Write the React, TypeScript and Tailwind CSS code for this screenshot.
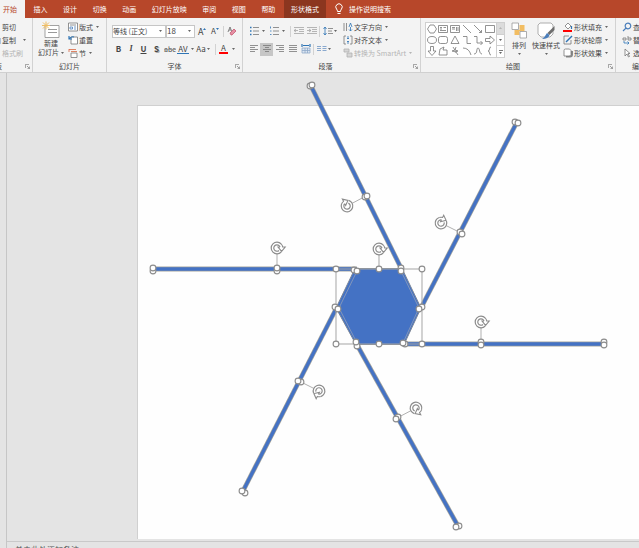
import React from "react";
import clsx from "clsx";

const TABS = ["开始", "插入", "设计", "切换", "动画", "幻灯片放映", "审阅", "视图", "帮助", "形状格式"];

function Caret({ muted }: { muted?: boolean }) {
  return (
    <svg viewBox="0 0 3 2" className={clsx("w-[3px] h-[2px] shrink-0", muted ? "fill-[#b5b5b5]" : "fill-[#666]")}>
      <path d="M0 0h3L1.5 2z" />
    </svg>
  );
}

function Divider() {
  return <span className="block w-px h-[11px] bg-[#d2d2d2] shrink-0" />;
}

type GroupProps = { label: string; launcher?: boolean; className?: string; labelClass?: string; children: React.ReactNode };

function Group({ label, launcher, className, labelClass, children }: GroupProps) {
  return (
    <section className={clsx("flex flex-col border-r border-[#d2d2d2] overflow-hidden", className)}>
      <div className="flex h-[42px]">{children}</div>
      <div className={clsx("flex items-center h-[13px] relative", labelClass ?? "justify-center")}>
        <span className="whitespace-nowrap">{label}</span>
        {launcher && (
          <button aria-label={`${label}设置`} className="absolute right-0.5 bottom-[3px]">
            <svg viewBox="0 0 5 5" className="w-[5px] h-[5px]" fill="none" stroke="#888" strokeWidth=".8">
              <path d="M.4 4V.4H4M2 2l2.5 2.5M4.6 2.5v2.1H2.5" />
            </svg>
          </button>
        )}
      </div>
    </section>
  );
}

type RowProps = { icon: React.ReactNode; text: string; caret?: boolean; muted?: boolean; caretClass?: string };

function Row({ icon, text, caret, muted, caretClass }: RowProps) {
  return (
    <button className={clsx("flex items-center gap-px h-[13px] whitespace-nowrap shrink-0", muted && "text-[#b5b5b5]")}>
      <svg viewBox="0 0 10 10" className="w-[10px] h-[10px] shrink-0" fill="none" stroke="#777" strokeWidth=".8">
        {icon}
      </svg>
      <span>{text}</span>
      {caret && <span className={caretClass ?? "ml-0.5"}><Caret muted={muted} /></span>}
    </button>
  );
}

function Tool({ label, active, children }: { label: string; active?: boolean; children: React.ReactNode }) {
  return (
    <button aria-label={label} className={clsx("w-[13px] h-[13px] flex items-center justify-center shrink-0", active && "bg-[#c6c6c6]")}>
      {children}
    </button>
  );
}

function Glyph({ children }: { children: React.ReactNode }) {
  return (
    <svg viewBox="0 0 10 10" className="w-[10px] h-[10px] shrink-0" fill="none" stroke="#777" strokeWidth=".8">
      {children}
    </svg>
  );
}

// 6 x 3 gallery of insertable shapes
const SHAPES: [string, string][] = [
  ["椭圆", "M3 1h4l2.500 4L7 9H3L.5 5z"],
  ["文本框", "M.5 1.500h9v7h-9zM2 3.500h2M2 5h2M2 6.500h6M5.500 3.500h2.500"],
  ["竖排文本框", "M.5 1.500h9v7h-9zM2 3.500h3M2 5h3M6.500 3v4M8 3v4"],
  ["直线", "M1 1l8 8"],
  ["箭头", "M1 1l7.5 7.5M8.5 6v2.5H6"],
  ["矩形", "M.5 1.500h9v7h-9z"],
  ["圆", "M.5 5a4.500 3.500 0 1 0 9 0a4.500 3.500 0 1 0-9 0z"],
  ["圆角矩形", "M2.500 1.500h5q2 0 2 2v3q0 2-2 2h-5q-2 0-2-2v-3q0-2 2-2z"],
  ["三角形", "M5 1L9 8.500H1z"],
  ["肘形", "M1 1.500h4v7h4"],
  ["肘形箭头", "M1 1.500h3v6.500h5.500M7.500 6l2 2-2 2"],
  ["右箭头", "M.5 3.500h4.500V1L9.500 5 5 9V6.500H.5z"],
  ["下箭头", "M3.500 .5v4.500H1L5 9.500 9 5H6.500V.5z"],
  ["任意多边形", "M2 3l4-2-1 3h4v5H1z"],
  ["自由曲线", "M3 1l2 3-3 1 4 1 2 3M6 1l-1 3 3 1-3 1"],
  ["弧形", "M1 2q6 0 8 7"],
  ["曲线", "M1 8c4 0 2-6 4-6s1 6 4 6"],
  ["左大括号", "M6 1Q4.500 1 4.500 3T3 5q1.500 0 1.500 2T6 9"],
];

const ALIGN = [
  { label: "左对齐", d: "M1 1.500h8M1 3.500h5M1 5.500h8M1 7.500h5" },
  { label: "居中", d: "M1 1.500h8M3 3.500h4M1 5.500h8M3 7.500h4" },
  { label: "右对齐", d: "M1 1.500h8M4 3.500h5M1 5.500h8M4 7.500h5" },
  { label: "两端对齐", d: "M1 1.500h8M1 3.500h8M1 5.500h8M1 7.500h8" },
];

function Ribbon() {
  return (
    <div className="flex h-[55px] shrink-0 bg-[#f3f3f3] border-b border-[#d0d0d0] text-[#444] overflow-hidden">
      <Group label="剪贴板" launcher className="w-[33px] shrink-0" labelClass="-ml-[19px]">
        <div className="flex flex-col pt-[2px] -ml-[9px]">
          <Row text="剪切" icon={<path d="M2 1l5 6M8 1L3 7M2 8h1M7 8h1" />} />
          <Row text="复制" caret caretClass="ml-[6px]" icon={<path stroke="#4a7ebb" d="M1 1h5v6H1zM4 3h5v6H4z" />} />
          <Row text="格式刷" muted icon={<path stroke="#bbb" d="M2 2h5v3H2zM5 5v4" />} />
        </div>
      </Group>

      <Group label="幻灯片" className="w-[74px] shrink-0">
        <button className="flex flex-col items-center w-[34px] pt-[3px] ml-px whitespace-nowrap shrink-0">
          <svg viewBox="0 0 18 17" className="w-[18px] h-[18px]" fill="none">
            <path d="M3 4h14v12H3z" fill="#fff" stroke="#8c8c8c" strokeWidth=".8" />
            <path d="M6 8h9M6 11h9" stroke="#999" />
            <path d="M4 0v8M0 4h8M1 1l6 6M7 1L1 7" stroke="#efbd63" />
          </svg>
          <span className="leading-[9px]">新建</span>
          <span className="flex items-center gap-0.5 leading-[9px]">幻灯片 <Caret /></span>
        </button>
        <div className="flex flex-col pt-[2px]">
          <Row text="版式" caret icon={<><path fill="#fff" d="M.5 1h9v8h-9z" /><path d="M2 3h6" /><path stroke="#4a7ebb" d="M2 5h2.500v2H2zM6 5h2M6 7h2" /></>} />
          <Row text="重置" icon={<><path fill="#fff" d="M3 2h6.500v7H3z" /><path stroke="#2f75b5" strokeWidth="1.2" d="M1 1v3h3M1 4q2-3 5-2" /></>} />
          <Row text="节" caret icon={<><path stroke="#d9663f" d="M1 1.500h7M3 3.500h6" /><path fill="#fff" d="M3 5h6v4.500H3z" /><path stroke="#d9663f" d="M1 1v3" /></>} />
        </div>
      </Group>

      <Group label="字体" launcher className="w-[136px] shrink-0">
        <div className="flex flex-col pt-[4px] pl-[5px] w-full">
          <div className="flex items-center h-[18px]">
            <label className="flex items-center w-[54px] h-[13px] bg-white border border-[#c6c6c6] pr-[3px]">
              <select aria-label="字体名称" className="appearance-none flex-1 min-w-0 bg-transparent">
                <option>等线 (正文)</option>
              </select>
              <Caret />
            </label>
            <label className="flex items-center w-[29px] h-[13px] bg-white border border-[#c6c6c6] pr-[3px]">
              <select aria-label="字号" className="appearance-none flex-1 min-w-0 bg-transparent text-[8px]">
                <option>18</option>
              </select>
              <Caret />
            </label>
            <button aria-label="增大字号" className="flex w-[13px] ml-[3px] text-[9px] leading-none">
              A<svg viewBox="0 0 3 2" className="w-[3px] h-[2px] mt-px fill-[#2f75b5]"><path d="M0 2h3L1.500 0z" /></svg>
            </button>
            <button aria-label="减小字号" className="flex w-[11px] text-[8px] leading-none">
              A<svg viewBox="0 0 3 2" className="w-[3px] h-[2px] mt-px fill-[#2f75b5]"><path d="M0 0h3L1.500 2z" /></svg>
            </button>
            <span className="mx-px"><Divider /></span>
            <Tool label="清除格式">
              <Glyph>
                <path stroke="#666" d="M1 6l2-5 2 5M2 4h2" />
                <path stroke="#c75a72" fill="#e58fa3" d="M3 7l4-4 2 2-4 4H4z" />
              </Glyph>
            </Tool>
          </div>
          <div className="flex items-center h-[18px] text-[8px] leading-none">
            <button className="w-[13px] shrink-0 font-bold">B</button>
            <button className="w-[12px] shrink-0 italic font-['Liberation_Serif',serif] font-bold">I</button>
            <button className="w-[13px] shrink-0 underline font-bold">U</button>
            <button className="w-[13px] shrink-0 font-bold [text-shadow:1px_1px_0_#aaa]">S</button>
            <button className="w-[14px] shrink-0 text-[7px] line-through decoration-[#999]">abc</button>
            <button className="w-[12px] shrink-0 border-b border-[#2f75b5]">AV</button>
            <span className="w-[6px] pl-0.5"><Caret /></span>
            <button className="w-[12px] shrink-0">Aa</button>
            <span className="w-[5px]"><Caret /></span>
            <span className="mx-[3px]"><Divider /></span>
            <button className="w-[9px] shrink-0 border-b-2 border-[#f00] leading-[8px]">A</button>
            <span className="ml-[4px]"><Caret /></span>
          </div>
        </div>
      </Group>

      <Group label="段落" launcher className="w-[178px] shrink-0" labelClass="justify-center pr-[12px]">
        <div className="flex flex-col pt-[4px] pl-[4px] w-[100px] shrink-0">
          <div className="flex items-center h-[18px]">
            <Tool label="项目符号"><Glyph><path d="M4 1.500h6M4 5h6M4 8.500h6" /><path stroke="#2f75b5" strokeWidth="1.5" d="M1 1.500h1.500M1 5h1.500M1 8.500h1.500" /></Glyph></Tool>
            <span className="w-[7px] pl-0.5"><Caret /></span>
            <Tool label="编号"><Glyph><path d="M4 1.500h6M4 5h6M4 8.500h6" /><path stroke="#2f75b5" d="M1.500 .5v2M1 5h1.500M1 8.500h1.500" /></Glyph></Tool>
            <span className="w-[7px] pl-0.5"><Caret /></span>
            <span className="mr-px ml-[3px]"><Divider /></span>
            <Tool label="减少缩进"><Glyph><path stroke="#a5a5a5" d="M0 1.500h10M5 3.500h5M5 5.500h5M0 7.500h10M4 4.500H0l2-1.500M0 4.500l2 1.500" /></Glyph></Tool>
            <Tool label="增加缩进"><Glyph><path stroke="#a5a5a5" d="M0 1.500h10M5 3.500h5M5 5.500h5M0 7.500h10M0 4.500h4L2 3M4 4.500L2 6" /></Glyph></Tool>
            <span className="mx-px"><Divider /></span>
            <Tool label="行距"><Glyph><path d="M5 2.500h5M5 5h4M5 7.500h5" /><path stroke="#2f75b5" d="M2 1v8M.5 3L2 1l1.500 2M.5 7L2 9l1.500-2" /></Glyph></Tool>
            <Caret />
          </div>
          <div className="flex items-center h-[18px]">
            {ALIGN.map((a) => (
              <Tool key={a.label} label={a.label} active={a.label === "居中"}>
                <Glyph><path d={a.d} /></Glyph>
              </Tool>
            ))}
            <Tool label="分散对齐"><Glyph><path d="M1 4h8v5H1zM1 6.500h8M4 4v5M6.500 4v5" stroke="#8fa9c9" fill="#dce6f2" /><path stroke="#2f75b5" strokeWidth="1.200" d="M1 0v3M9 0v3M2 1.500h6" /></Glyph></Tool>
            <span className="mx-px"><Divider /></span>
            <Tool label="分栏"><Glyph><path stroke="#6f96c4" d="M0 2.500h4M0 4.500h4M0 6.500h4M5.500 2.500h4M5.500 4.500h4M5.500 6.500h4" /></Glyph></Tool>
            <Caret />
          </div>
        </div>
        <div className="flex flex-col pt-[2px]">
          <Row text="文字方向" caret icon={<><path d="M1 1v8M3.500 1v8" /><path stroke="#2f75b5" d="M6 5l1.500-4L9 5M7.500 5v4M6 7.500L7.500 9 9 7.500" /></>} />
          <Row text="对齐文本" caret icon={<><path d="M3 1H1v8h2M7 1h2v8H7" /><path stroke="#2f75b5" d="M5 1v3M5 6v3M4 3l1 1 1-1M4 7l1-1 1 1" /></>} />
          <Row text="转换为 SmartArt" caret muted icon={<path stroke="#b0b0b0" fill="#d6d6d6" d="M1 1h5v3H1zM4 5h5v4H4z" />} />
        </div>
      </Group>

      <Group label="绘图" launcher className="w-[195px] shrink-0" labelClass="justify-center pr-[10px]">
        <div className="flex mt-[4px] ml-[4px] h-[36px] w-[80px] shrink-0 bg-white border border-[#cfcfcf]">
          <div className="grid grid-cols-6 flex-1 items-center justify-items-center">
            {SHAPES.map(([name, d]) => (
              <button key={name} aria-label={name} className="flex">
                <Glyph><path d={d} /></Glyph>
              </button>
            ))}
          </div>
          <div className="flex flex-col w-[8px] border-l border-[#cfcfcf]">
            <button aria-label="向上" className="flex-1 flex items-center justify-center bg-[#dcdcdc]"><span className="rotate-180"><Caret muted /></span></button>
            <button aria-label="向下" className="flex-1 flex items-center justify-center border-y border-[#cfcfcf]"><Caret /></button>
            <button aria-label="其他" className="flex-1 flex flex-col items-center justify-center gap-px"><span className="w-[4px] h-px bg-[#777]" /><Caret /></button>
          </div>
        </div>
        <button className="flex flex-col items-center w-[26px] pt-[4px] ml-px shrink-0">
          <svg viewBox="0 0 16 17" className="w-[17px] h-[17px] mb-px">
            <path d="M8 3h5v6H8zM3 8h5v5H3z" fill="#f2bd62" />
            <path d="M.5 1h6.500v6.500H.5zM8.500 9.500H15V16H8.500z" fill="#fff" stroke="#999" strokeWidth=".8" />
          </svg>
          <span className="leading-[10px]">排列</span>
          <span className="pt-[3px]"><Caret /></span>
        </button>
        <button className="flex flex-col items-center w-[28px] pt-[4px] whitespace-nowrap shrink-0">
          <svg viewBox="0 0 18 17" className="w-[18px] h-[17px] mb-px">
            <path d="M3 1h11l2 2v9l-3 3H4l-3-3V3z" fill="#fff" stroke="#999" strokeWidth=".8" />
            <path d="M17.500 4v4l-5 5-2-2z" fill="#6d6d6d" />
            <path d="M10 11l2.500 2q-1 4-7.500 4 3-2 5-6z" fill="#4a7ebb" />
          </svg>
          <span className="leading-[10px]">快速样式</span>
          <span className="pt-[3px]"><Caret /></span>
        </button>
        <div className="flex flex-col pt-[2px] pl-[3px]">
          <Row text="形状填充" caret icon={<><path fill="#fff" d="M2 4l3-3 3 3-3 3z" /><path stroke="#2f75b5" strokeWidth="1.2" d="M8.500 4v3" /><path stroke="#f00" strokeWidth="2" d="M0 9h9" /></>} />
          <Row text="形状轮廓" caret icon={<><path d="M6 1H1v8h7V5" /><path stroke="#2f75b5" strokeWidth="1.500" d="M3 7l6-6" /></>} />
          <Row text="形状效果" caret icon={<><path strokeWidth="2" stroke="#888" d="M3 8.500h4q2 0 2-2V3" /><path fill="#fff" d="M1 2.500Q1 1 2.500 1h4L8 2.500v4L6.500 8H1z" /></>} />
        </div>
      </Group>

      <Group label="编辑" className="flex-1 min-w-0 border-r-0" labelClass="pl-[16px]">
        <div className="flex flex-col pt-[2px] pl-[6px]">
          <Row text="查找" icon={<path stroke="#4a7ebb" strokeWidth="1.200" d="M4 6a2.800 2.800 0 1 1 2 0.800A2.800 2.800 0 0 1 4 6L1 9" />} />
          <Row text="替换" caret icon={<><path d="M1 3h3v2H1zM6 1v4h3V3H6" /><path stroke="#2f75b5" d="M2 6v2h5M5.500 6.500L7 8 5.500 9.500" /></>} />
          <Row text="选择" caret icon={<path fill="#fff" d="M3 1v7l2-2 1.500 3 1-.5L6 5.500h2z" />} />
        </div>
      </Group>
    </div>
  );
}

type Spoke = {
  from: [number, number];
  to: [number, number];
  handles: [number, number][];
  knob: [number, number, number];
  mid: [number, number];
};

const SPOKES: Spoke[] = [
  { from: [153, 269], to: [357, 269], handles: [[153, 271], [153, 268], [277, 271], [277, 268], [354, 270], [357, 271]], mid: [277, 269], knob: [277, 248, 0] },
  { from: [311, 86], to: [402, 270], handles: [[310, 86], [312, 85], [365, 197], [367, 196], [401, 268], [401, 271]], mid: [366, 196], knob: [347, 206, -117] },
  { from: [517, 122], to: [421, 308], handles: [[515, 122], [518, 123], [460, 232], [462, 234], [422, 307], [419, 309]], mid: [461, 233], knob: [441, 223, -64] },
  { from: [405, 344], to: [604, 344], handles: [[604, 342], [604, 345], [481, 342], [481, 345], [405, 344], [403, 343]], mid: [481, 344], knob: [481, 322, 0] },
  { from: [337, 307], to: [243, 491], handles: [[245, 493], [242, 491], [301, 382], [298, 381], [335, 307], [338, 309]], mid: [299, 381], knob: [319, 391, 117] },
  { from: [356, 343], to: [458, 526], handles: [[459, 526], [456, 527], [398, 417], [396, 419], [357, 346], [356, 342]], mid: [397, 418], knob: [416, 408, 62] },
];

const BOX_HANDLES: [number, number][] = [[336, 269], [379, 269], [422, 269], [336, 344], [379, 344], [422, 344]];

function Handle({ at }: { at: [number, number] }) {
  return <circle cx={at[0]} cy={at[1]} r="2.9" fill="#fff" stroke="#8c8c8c" strokeWidth="1.1" />;
}

// Rotation knob: an outlined ring broken by an arrow head on its right side
function Knob({ at: [x, y, angle] }: { at: [number, number, number] }) {
  return (
    <g transform={`translate(${x} ${y}) rotate(${angle})`} fill="none">
      <circle r="6" fill="#fff" />
      <path d="M4.200 -4A5.800 5.800 0 1 0 4.200 4" stroke="#8c8c8c" strokeWidth="1.200" />
      <path d="M4.200 -4Q5.500 -2.600 5.700 -1H8.200L4.600 3.400 1 -1H3" fill="#fff" stroke="#8c8c8c" strokeWidth="1.100" />
      <path d="M3 -1A3.200 3.200 0 1 0 2 2.500" stroke="#8c8c8c" strokeWidth="1.200" />
    </g>
  );
}

function Drawing() {
  return (
    <svg viewBox="0 73 639 475" className="absolute left-0 top-0 w-[639px] h-[475px]" role="img" aria-label="六边形与六条线段">
      {SPOKES.map((s, i) => (
        <g key={i}>
          <line x1={s.from[0]} y1={s.from[1]} x2={s.to[0]} y2={s.to[1]} stroke="#a3a39c" strokeWidth="4.8" />
          <line x1={s.from[0]} y1={s.from[1]} x2={s.to[0]} y2={s.to[1]} stroke="#4472c4" strokeWidth="3.4" />
        </g>
      ))}
      <path d="M355 268.500H402L421 308 404 344.500H356L336 308z" fill="#4472c4" stroke="#7d8797" strokeWidth="1" />
      <path d="M357 271L339 308l18 35M401 271l18 37-16 35" fill="none" stroke="#8296bb" strokeWidth="1" />
      <path d="M336 269h86v75h-86zM379 269v-14" fill="none" stroke="#a5a5a5" strokeWidth="1" />
      {SPOKES.map((s, i) => (
        <line key={i} x1={s.mid[0]} y1={s.mid[1]} x2={s.knob[0]} y2={s.knob[1]} stroke="#b0b0b0" strokeWidth="1" />
      ))}
      {BOX_HANDLES.map((h, i) => <Handle key={i} at={h} />)}
      {SPOKES.map((s, i) => (
        <g key={i}>
          {s.handles.map((h, j) => <Handle key={j} at={h} />)}
          <Knob at={s.knob} />
        </g>
      ))}
      <Knob at={[379, 249, 0]} />
    </svg>
  );
}

export default function App() {
  return (
    <div className="flex flex-col h-screen overflow-hidden bg-[#e4e4e4] text-[7px] leading-[10px] font-['Noto_Sans_CJK_SC',sans-serif]">
      {/* Tab strip */}
      <header className="flex h-[18px] shrink-0 bg-[#b7472a] text-white">
        <nav className="flex justify-between w-[326px] shrink-0">
          {TABS.map((tab, i) => (
            <button
              key={tab}
              className={clsx(
                "whitespace-nowrap h-full",
                i === 0 && "pl-[3px] pr-2 bg-[#f3f3f3] text-[#b7472a]",
                i > 0 && "px-[7px]",
                i === TABS.length - 1 && "bg-[#8b361f]"
              )}
            >
              {tab}
            </button>
          ))}
        </nav>
        <label className="flex items-center gap-[5px] pl-[8px]">
          <svg viewBox="0 0 10 12" className="w-[10px] h-[12px]" fill="none" stroke="#fff" strokeWidth="1">
            <path d="M3.500 8.500Q3.500 7 2.500 6A3.200 3.200 0 1 1 7.500 6Q6.500 7 6.500 8.500zM3.500 10.500h3" />
          </svg>
          <input aria-label="搜索" placeholder="操作说明搜索" className="w-[60px] bg-transparent outline-none placeholder:text-white" />
        </label>
      </header>

      <Ribbon />

      {/* Workspace */}
      <main className="relative flex flex-1 min-h-0">
        <aside className="w-[7px] shrink-0 border-r border-[#c6c6c6]" />
        <div className="flex flex-col flex-1 min-w-0">
          <div className="flex flex-1 min-h-0 pt-[32px] pl-[130px]">
            <div className="flex-1 bg-[#fefefe] border-l border-t border-[#d0d0d0]" />
          </div>
          <div className="h-[7px] shrink-0 mt-[2px] border-t border-[#c9c9c9] pl-[8px] pt-[3px] overflow-hidden">
            <textarea aria-label="备注" placeholder="单击此处添加备注" rows={1} className="block w-full resize-none bg-transparent text-[8px] outline-none placeholder:text-[#555]" />
          </div>
        </div>
        <Drawing />
      </main>
    </div>
  );
}
